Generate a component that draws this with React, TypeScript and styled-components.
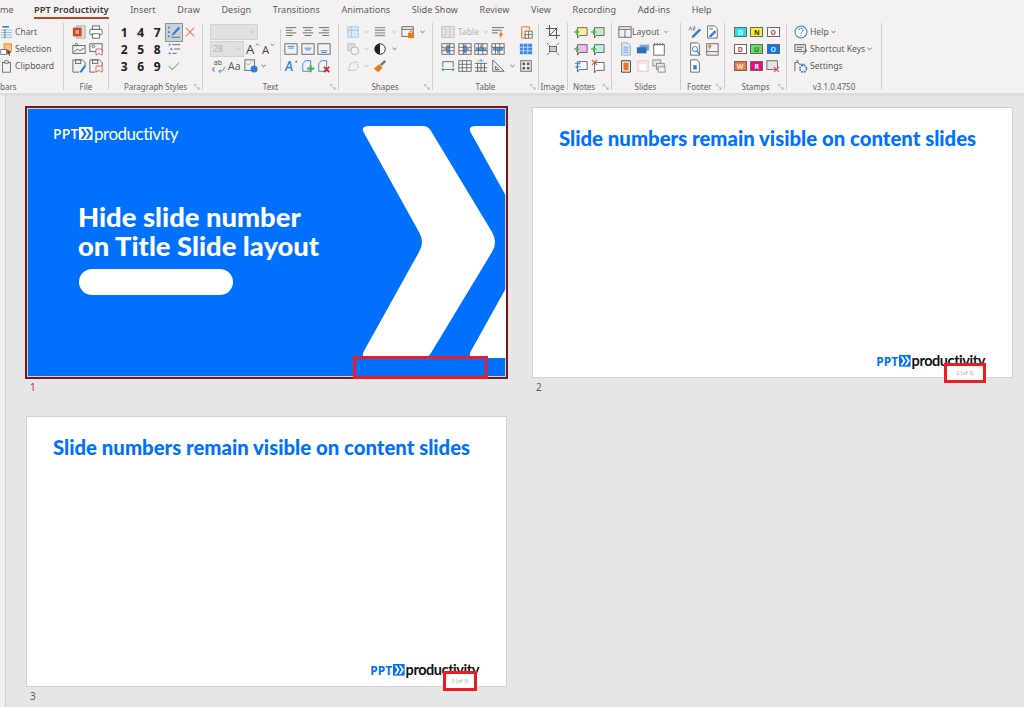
import React, { ReactNode } from 'react'
import styled, { createGlobalStyle } from 'styled-components'

const GlobalStyle = createGlobalStyle`
  html, body {
    margin: 0;
    height: 100%;
    overflow: hidden;
    background: #e6e6e6;
  }
  body {
    font-family: "Noto Sans", "Open Sans", sans-serif;
  }
`

const Page = styled.div`
  display: flex;
  flex-direction: column;
  width: 1024px;
  height: 707px;
  overflow: hidden;
`

const Ribbon = styled.header`
  flex: 0 0 93px;
  background: #f3f2f1;
  border-bottom: 1px solid #dcdcdc;
  box-shadow: 0 1px 2px rgba(0, 0, 0, 0.08);
  position: relative;
  z-index: 1;
`

const Tabs = styled.nav`
  display: flex;
  height: 23px;
  padding-left: 34px;
  gap: 21.6px;
  position: relative;
`

const Tab = styled.div<{ $active?: boolean }>`
  height: 17px;
  line-height: 20px;
  font-size: ${({ $active }) => ($active ? 9.3 : 9.05)}px;
  letter-spacing: 0.05px;
  white-space: nowrap;
  color: ${({ $active }) => ($active ? '#3a3a3a' : '#5a5a5a')};
  font-weight: ${({ $active }) => ($active ? 600 : 400)};
  border-bottom: ${({ $active }) => ($active ? '2px solid #b7472a' : '2px solid transparent')};
`

const CutTab = styled(Tab)`
  position: absolute;
  left: 0;
`

const Groups = styled.div`
  display: flex;
  height: 70px;
`

const Group = styled.section<{ $w: number; $pad?: number }>`
  flex: 0 0 ${({ $w }) => $w}px;
  display: flex;
  flex-direction: column;
  position: relative;
  box-sizing: border-box;
  padding-left: ${({ $pad }) => $pad ?? 7}px;
  border-right: 1px solid #cdcdcd;
  margin-bottom: 3px;
`

const GroupBody = styled.div`
  flex: 1;
  display: flex;
  padding-top: 0.5px;
`

const GroupLabel = styled.div<{ $left?: boolean }>`
  height: 9px;
  line-height: 12px;
  font-size: 8px;
  color: #5f5f5f;
  white-space: nowrap;
  margin-left: ${({ $left }) => ($left ? 0 : -7)}px;
  text-align: ${({ $left }) => ($left ? 'left' : 'center')};
`

const Launcher = styled.svg`
  position: absolute;
  right: 2px;
  bottom: 0;
  width: 6px;
  height: 6px;
`

const IconGrid = styled.div<{ $tpl: string }>`
  display: grid;
  grid-template-columns: ${({ $tpl }) => $tpl};
  grid-auto-rows: 17px;
`

const Cell = styled.div<{ $span?: number; $active?: boolean }>`
  display: flex;
  align-items: center;
  justify-content: center;
  grid-column: span ${({ $span }) => $span ?? 1};
  box-sizing: border-box;
  background: ${({ $active }) => ($active ? '#c9d3da' : 'transparent')};
  outline: ${({ $active }) => ($active ? '1px solid #8d9499' : 'none')};
`

const Stack = styled.div`
  display: flex;
  flex-direction: column;
`

const Row = styled.div`
  display: flex;
  align-items: center;
  height: 17px;
  gap: 2px;
`

const ItemText = styled.span<{ $muted?: boolean }>`
  font-size: 8.6px;
  color: ${({ $muted }) => ($muted ? '#b5b5b5' : '#5a5a5a')};
  white-space: nowrap;
`

const NumberKey = styled.span`
  font-family: "Open Sans", sans-serif;
  font-weight: 700;
  font-size: 12px;
  color: #202020;
`

const Stamp = styled.span<{ $bg: string; $fg: string }>`
  display: flex;
  align-items: center;
  justify-content: center;
  box-sizing: border-box;
  width: 13px;
  height: 10px;
  font-size: 7px;
  font-weight: 700;
  background: ${({ $bg }) => $bg};
  color: ${({ $fg }) => $fg};
  border: 1px solid #666;
`

const Disabled = styled.div<{ $w: number }>`
  display: flex;
  align-items: center;
  justify-content: space-between;
  box-sizing: border-box;
  width: ${({ $w }) => $w}px;
  height: 16px;
  padding: 0 2px 0 2px;
  background: #e1e1e1;
  border: 1px solid #d2d2d2;
  font-size: 8.6px;
  color: #b0b0b0;
`

const Inner = styled.div`
  width: 1px;
  height: 42px;
  margin: 5px 2px 0 3.5px;
  background: #cfcfcf;
`

const Canvas = styled.main`
  flex: 1;
  display: flex;
  background: #e6e6e6;
`

const Gutter = styled.div`
  flex: 0 0 5px;
  background: #efefef;
  border-right: 1px solid #d0d0d0;
`

const SlideGrid = styled.div`
  display: grid;
  grid-template-columns: 479px 479px;
  grid-auto-rows: 309px;
  column-gap: 27px;
  padding: 14px 0 0 21px;
`

const SlideCell = styled.div`
  display: flex;
  flex-direction: column;
`

const Slide = styled.div<{ $selected?: boolean }>`
  position: relative;
  box-sizing: border-box;
  width: 479px;
  height: 269px;
  display: flex;
  flex-direction: column;
  background: ${({ $selected }) => ($selected ? '#0070ff' : '#fff')};
  box-shadow: ${({ $selected }) =>
    $selected ? 'inset 0 0 0 1px #c6d5ea, 0 0 0 2px #7d1518' : '0 0 0 1px #d3d3d3'};
`

const SlideNumber = styled.div<{ $selected?: boolean }>`
  margin: 4px 0 0 3px;
  font-size: 10px;
  line-height: 12px;
  color: ${({ $selected }) => ($selected ? '#c0392b' : '#5a5a5a')};
`

const ContentTitle = styled.h2`
  margin: 18px 0 0 26px;
  font-family: Lato, sans-serif;
  font-weight: 900;
  font-size: 20.33px;
  line-height: 24px;
  color: #0070ff;
  white-space: nowrap;
`

const TitleArt = styled.svg`
  position: absolute;
  left: 0;
  top: 0;
  width: 479px;
  height: 269px;
`

const Hero = styled.div`
  display: flex;
  flex-direction: column;
  padding: 15px 0 0 26px;
  position: relative;
`

const HeroTitle = styled.h1`
  margin: 58px 0 0 25px;
  font-family: Lato, sans-serif;
  font-weight: 900;
  font-size: 27.4px;
  line-height: 29px;
  color: #fff;
  white-space: nowrap;
`

const Pill = styled.div`
  width: 154px;
  height: 26px;
  margin: 9px 0 0 26px;
  border-radius: 13px;
  background: #fff;
`

const LogoWrap = styled.div<{ $light?: boolean; $size: number }>`
  display: flex;
  align-items: center;
  gap: ${({ $size }) => $size * 0.06}px;
  height: ${({ $size }) => $size * 1.25}px;
  font-family: Lato, sans-serif;
  font-size: ${({ $size }) => $size}px;
  color: ${({ $light }) => ($light ? '#fff' : '#111')};
`

const LogoPpt = styled.span<{ $light?: boolean }>`
  font-family: "Open Sans", sans-serif;
  font-weight: ${({ $light }) => ($light ? 600 : 700)};
  font-size: 0.82em;
  letter-spacing: 0.01em;
  color: ${({ $light }) => ($light ? '#fff' : '#0070ff')};
`

const LogoWord = styled.span<{ $light?: boolean }>`
  font-weight: ${({ $light }) => ($light ? 400 : 700)};
  letter-spacing: -0.03em;
`

const ContentLogo = styled.div`
  margin-top: auto;
  align-self: flex-end;
  margin-right: 27px;
  margin-bottom: 7px;
`

const RedBox = styled.div<{ $l: number; $t: number; $w: number; $h: number; $fill: string }>`
  position: absolute;
  left: ${({ $l }) => $l}px;
  top: ${({ $t }) => $t}px;
  width: ${({ $w }) => $w}px;
  height: ${({ $h }) => $h}px;
  box-sizing: border-box;
  display: flex;
  align-items: center;
  justify-content: center;
  border: 3px solid #ed1c24;
  background: ${({ $fill }) => $fill};
  font-size: 5.4px;
  color: #a9a9a9;
`

const G = '#5e5e5e'
const B = '#2f7fd6'
const R = '#d9534f'
const O = '#e07b25'

const icons: Record<string, ReactNode> = {
  chart: (
    <>
      <rect x="3" y="0" width="8" height="2" fill={B} />
      <path d="M1 5h14M1 8h14M1 11h14M1 14h14" stroke="#7fb2e5" />
      <path d="M6 4v11" stroke={G} />
    </>
  ),
  selection: (
    <>
      <rect x="5" y="1" width="9" height="9" fill="#f5c37a" stroke={O} />
      <rect x="1" y="8" width="7" height="6" fill="#fff" stroke={G} />
      <path d="M9 8l5 4-2.500 .5 1 3-1 .5-1.500-3-1 1.500z" fill="#444" />
    </>
  ),
  clipboard: (
    <>
      <rect x="3" y="3" width="10" height="12" fill="none" stroke={G} />
      <rect x="6" y="1" width="4" height="3" fill="#fff" stroke={G} />
    </>
  ),
  ppt: (
    <>
      <rect x="5" y="1" width="10" height="14" fill="#ddd" stroke="#aaa" />
      <rect x="1" y="3" width="10" height="10" fill="#d24726" />
      <rect x="4" y="6" width="4" height="4" fill="#f0a890" />
    </>
  ),
  print: (
    <>
      <rect x="4" y="1" width="8" height="4" fill="#fff" stroke={G} />
      <rect x="1" y="5" width="14" height="6" rx="1" fill="#fff" stroke={G} />
      <rect x="4" y="10" width="8" height="5" fill="#fff" stroke={G} />
    </>
  ),
  picA: (
    <>
      <rect x="1" y="4" width="14" height="9" fill="none" stroke={G} />
      <path d="M2 12l4-4 3 2 5-3" fill="none" stroke={G} />
      <circle cx="5" cy="3" r="1.500" fill="none" stroke={G} />
    </>
  ),
  picB: (
    <>
      <rect x="1" y="2" width="14" height="9" fill="none" stroke={G} />
      <circle cx="5" cy="5" r="1.500" fill="none" stroke={G} />
      <path d="M8 8h7v7l-3.500-2L8 15z" fill="#fff" stroke={R} />
    </>
  ),
  saveEdit: (
    <>
      <path d="M1 1h11l3 3v5M1 1v14h7" fill="none" stroke={G} />
      <rect x="4" y="1" width="6" height="4" fill="none" stroke={G} />
      <path d="M9 14l5-7 2 1.500-5 7H9z" fill={B} />
    </>
  ),
  saveRed: (
    <>
      <path d="M1 1h11l3 3v4M1 1v14h6" fill="none" stroke={G} />
      <rect x="4" y="1" width="6" height="4" fill="none" stroke={G} />
      <path d="M8 8h7v7l-3.500-2L8 15z" fill="#fff" stroke={R} />
    </>
  ),
  listEdit: (
    <>
      <path d="M1 3h2M1 8h2M1 13h2" stroke={B} strokeWidth="2" />
      <path d="M5 14h10" stroke={G} />
      <path d="M6 10l7-8 2 2-7 7-3 1z" fill={B} />
    </>
  ),
  cross: <path d="M3 3l10 10M13 3L3 13" stroke="#e8736f" strokeWidth="1.200" />,
  bullets: (
    <>
      <path d="M2 3h2M4 8h2M2 13h2" stroke={B} strokeWidth="2" />
      <path d="M6 3h9M8 8h7M6 13h5" stroke={G} />
    </>
  ),
  check: <path d="M2 8l4 4 8-8" fill="none" stroke="#62b96f" strokeWidth="1.200" />,
  grow: (
    <>
      <text x="0" y="14" fontFamily="Open Sans" fontSize="15" fill="#444">A</text>
      <path d="M11 4l2-2 2 2" fill="none" stroke={B} />
    </>
  ),
  shrink: (
    <>
      <text x="1" y="14" fontFamily="Open Sans" fontSize="13" fill="#444">A</text>
      <path d="M11 2l2 2 2-2" fill="none" stroke={B} />
    </>
  ),
  replace: (
    <>
      <text x="2" y="7" fontFamily="Open Sans" fontSize="8" fill="#444">ab</text>
      <path d="M3 10a2 2 0 1 0 0 4" fill="none" stroke="#444" />
      <path d="M14 9c0 4-3 5-6 5m2-2l-2 2 2 2" fill="none" stroke={B} />
    </>
  ),
  caseAa: (
    <text x="0" y="13" fontFamily="Open Sans" fontSize="12" fill="#555">Aa</text>
  ),
  spell: (
    <>
      <rect x="1" y="1" width="11" height="12" fill="none" stroke={G} />
      <path d="M3 5l2 2 4-4" fill="none" stroke="#62b96f" />
      <circle cx="11.500" cy="11.500" r="4" fill={B} />
    </>
  ),
  alignL: <path d="M2 3h12M2 6h8M2 9h12M2 12h8" stroke={G} />,
  alignC: <path d="M2 3h12M4 6h8M2 9h12M4 12h8" stroke={G} />,
  alignR: <path d="M2 3h12M6 6h8M2 9h12M6 12h8" stroke={G} />,
  boxTop: (
    <>
      <rect x="1" y="2" width="14" height="12" fill="none" stroke={G} />
      <path d="M4 5h8M5 7h6" stroke={B} />
    </>
  ),
  boxMid: (
    <>
      <rect x="1" y="2" width="14" height="12" fill="none" stroke={G} />
      <path d="M4 7h8M5 9h6" stroke={B} />
    </>
  ),
  boxBot: (
    <>
      <rect x="1" y="2" width="14" height="12" fill="none" stroke={G} />
      <path d="M4 10h8M5 12h6" stroke={B} />
    </>
  ),
  aStyle: (
    <>
      <text x="1" y="14" fontFamily="Lato" fontStyle="italic" fontWeight="700" fontSize="14" fill={B}>A</text>
      <circle cx="14" cy="3" r="1" fill={G} />
    </>
  ),
  addGreen: (
    <>
      <path d="M2 5l3-3h6v12H2z" fill="none" stroke={B} />
      <path d="M11 7v8M7 11h8" stroke="#4caf50" strokeWidth="2.400" />
    </>
  ),
  delRed: (
    <>
      <path d="M2 5l3-3h6v12H2z" fill="none" stroke={B} />
      <path d="M8 9l6 6M14 9l-6 6" stroke="#e02020" strokeWidth="2" />
    </>
  ),
  gridBlue: (
    <>
      <rect x="2" y="2" width="12" height="12" fill="#dbe8f5" stroke="#a9c4e0" />
      <path d="M6 2v12M2 6h12" stroke="#a9c4e0" />
    </>
  ),
  lines: (
    <path d="M2 3h12M2 6h12M2 9h12M2 12h12" stroke="#9a9a9a" strokeWidth="1.500" />
  ),
  lockWin: (
    <>
      <rect x="1" y="2" width="13" height="11" fill="none" stroke={G} />
      <path d="M1 5h13" stroke={G} />
      <rect x="8" y="9" width="7" height="6" fill={O} />
      <path d="M10 9V7h3v2" fill="none" stroke={O} />
    </>
  ),
  shapeGrey: (
    <>
      <rect x="2" y="2" width="8" height="8" fill="#ddd" stroke="#bbb" />
      <circle cx="10" cy="10" r="4.500" fill="#f3f2f1" stroke="#aaa" />
    </>
  ),
  contrast: (
    <>
      <circle cx="8" cy="8" r="6" fill="#fff" stroke="#222" />
      <path d="M8 2a6 6 0 0 0 0 12z" fill="#222" />
    </>
  ),
  freeform: (
    <path d="M3 13l2-8 7-2 2 6-4 4z" fill="none" stroke="#aaa" strokeDasharray="2 1" />
  ),
  brush: (
    <>
      <path d="M1 11l6-5 4 4-5 5z" fill={O} />
      <path d="M8 6l5-5 2 2-5 5z" fill="#777" />
    </>
  ),
  tableGrey: (
    <>
      <rect x="1" y="2" width="14" height="12" fill="#f3f2f1" stroke="#b5b5b5" />
      <path d="M1 5h14M1 8h14M1 11h14M5 2v12M10 2v12" stroke="#c5c5c5" />
    </>
  ),
  lineOrange: (
    <>
      <path d="M1 3h14M1 6h11M1 9h7" stroke={G} />
      <path d="M12 6l-3 6h2l-1 4 4-6h-2z" fill={O} />
    </>
  ),
  clipTable: (
    <>
      <path d="M3 2h9v4M3 2v13h5" fill="#f5d9b8" stroke={O} />
      <rect x="7" y="7" width="8" height="8" fill="#fff" stroke={G} />
      <path d="M7 11h8M11 7v8" stroke={G} />
    </>
  ),
  tL: (
    <>
      <rect x="1" y="2" width="14" height="12" fill="#fff" stroke={G} />
      <rect x="6" y="3" width="4" height="10" fill="#5d9bdc" />
      <path d="M1 6h14M1 10h14M10 2v12" stroke={G} />
      <path d="M7 8H3" stroke="#333" />
    </>
  ),
  tR: (
    <>
      <rect x="1" y="2" width="14" height="12" fill="#fff" stroke={G} />
      <rect x="6" y="3" width="4" height="10" fill="#5d9bdc" />
      <path d="M1 6h14M1 10h14M6 2v12" stroke={G} />
      <path d="M9 8h4" stroke="#333" />
    </>
  ),
  tU: (
    <>
      <rect x="1" y="2" width="14" height="12" fill="#fff" stroke={G} />
      <rect x="2" y="6" width="12" height="4" fill="#5d9bdc" />
      <path d="M5 2v12M10 2v12M1 10h14" stroke={G} />
      <path d="M8 7V3" stroke="#333" />
    </>
  ),
  tD: (
    <>
      <rect x="1" y="2" width="14" height="12" fill="#fff" stroke={G} />
      <rect x="2" y="6" width="12" height="4" fill="#5d9bdc" />
      <path d="M5 2v12M10 2v12M1 6h14" stroke={G} />
      <path d="M8 9v4" stroke="#333" />
    </>
  ),
  span: (
    <>
      <path d="M2 9V3h12v6" fill="none" stroke={G} />
      <path d="M1 12h14M1 12l2-2M1 12l2 2M15 12l-2-2M15 12l-2 2" fill="none" stroke={B} />
    </>
  ),
  grid: (
    <>
      <rect x="1" y="2" width="14" height="12" fill="#fff" stroke={G} />
      <path d="M1 6h14M1 10h14M5 2v12M10 2v12" stroke={G} />
    </>
  ),
  rowsEq: (
    <>
      <path d="M1 5h14M1 10h14M1 14h14M4 5v9M8 5v9M12 5v9" stroke={G} fill="none" />
      <path d="M8 0v3" stroke={B} />
      <path d="M4 2h8" stroke={B} strokeDasharray="1 1" />
    </>
  ),
  diag: (
    <>
      <path d="M2 1v13h13z" fill="none" stroke={G} />
      <path d="M5 8v4h4z" fill="none" stroke={G} />
    </>
  ),
  tableBlue: (
    <>
      <rect x="1" y="2" width="14" height="12" fill="#3b8ae0" />
      <path d="M1 6h14M1 10h14M5 2v12M10 2v12" stroke="#fff" strokeWidth=".7" />
    </>
  ),
  tableDots: (
    <>
      <rect x="2" y="2" width="12" height="12" fill="none" stroke={G} />
      <rect x="4" y="4" width="3" height="3" fill={G} />
      <rect x="9" y="4" width="3" height="3" fill={G} />
      <rect x="4" y="9" width="3" height="3" fill={G} />
      <rect x="9" y="9" width="3" height="3" fill={G} />
    </>
  ),
  crop: (
    <path d="M4 0v12h12M0 4h12v12M3 13L13 3" fill="none" stroke="#444" />
  ),
  fit: (
    <>
      <rect x="4" y="5" width="8" height="6" fill="#ccc" stroke={G} />
      <path d="M1 1l3 3M15 1l-3 3M1 15l3-3M15 15l-3-3" stroke={B} />
    </>
  ),
  nY: (
    <>
      <path d="M4 3h11v9H6l-2 3z" fill="#f5ef9a" stroke={G} />
      <path d="M3 5v6M0 8h6" stroke="#5cb85c" strokeWidth="1.500" />
    </>
  ),
  nG: (
    <>
      <path d="M4 3h11v9H6l-2 3z" fill="#c5ecc0" stroke={G} />
      <path d="M3 5v6M0 8h6" stroke="#5cb85c" strokeWidth="1.500" />
    </>
  ),
  nP: (
    <>
      <path d="M4 3h11v9H6l-2 3z" fill="#f0b8ee" stroke={G} />
      <path d="M3 5v6M0 8h6" stroke="#5cb85c" strokeWidth="1.500" />
    </>
  ),
  nC: (
    <>
      <path d="M4 3h11v9H6l-2 3z" fill="#bfeee8" stroke={G} />
      <path d="M3 5v6M0 8h6" stroke="#5cb85c" strokeWidth="1.500" />
    </>
  ),
  nA: (
    <>
      <path d="M4 3h11v9H6l-2 3z" fill="#fff" stroke={G} />
      <path d="M1 5h6M5 3l2 2-2 2M8 9H2M4 7L2 9l2 2" fill="none" stroke={B} />
    </>
  ),
  nX: (
    <>
      <path d="M4 4h11v9H6l-2 3z" fill="#fff" stroke={G} />
      <path d="M1 1l6 6M7 1L1 7" stroke="#e05050" strokeWidth="1.200" />
    </>
  ),
  layout: (
    <>
      <rect x="1" y="2" width="14" height="12" fill="none" stroke={G} />
      <path d="M1 5h14M8 5v9" stroke={G} />
    </>
  ),
  page: (
    <>
      <path d="M3 1h7l3 3v11H3z" fill="#dce8f5" stroke="#8aa9c9" />
      <path d="M5 6h6M5 8h6M5 10h6M5 12h6" stroke={B} strokeWidth=".6" />
    </>
  ),
  box: (
    <>
      <rect x="4" y="3" width="11" height="7" fill="#7fa8d6" />
      <rect x="1" y="6" width="11" height="7" fill="#2f6fb7" />
    </>
  ),
  win: (
    <>
      <rect x="2" y="3" width="12" height="12" fill="#fff" stroke={G} />
      <path d="M3 1v3M6 1v3M9 1v3M12 1v3" stroke={G} />
    </>
  ),
  orangeDoc: (
    <>
      <path d="M3 2h10v13H3z" fill="#fff" stroke="#222" />
      <rect x="5" y="4" width="6" height="9" fill={O} />
    </>
  ),
  pinkRect: (
    <>
      <rect x="2" y="2" width="12" height="12" fill="#fde0e8" stroke="#f5c0cf" />
      <rect x="4" y="6" width="8" height="7" fill="#fff" />
    </>
  ),
  stack: (
    <>
      <rect x="1" y="1" width="9" height="7" fill="#e5e5e5" stroke="#888" />
      <rect x="5" y="5" width="9" height="7" fill="#e5e5e5" stroke="#888" />
      <rect x="7" y="9" width="8" height="6" fill="#f3f2f1" stroke="#888" />
    </>
  ),
  pencilNum: (
    <>
      <path d="M1 6l2-4 1 4M6 2h2v2H6v2h2" fill="none" stroke={G} strokeWidth=".8" />
      <path d="M4 15l1-3 8-8 2 2-8 8z" fill={B} />
    </>
  ),
  docBrush: (
    <>
      <path d="M3 1h8l3 3v11H3z" fill="#fff" stroke={G} />
      <path d="M4 13l7-7 2 2-6 6z" fill={B} />
      <rect x="5" y="3" width="4" height="3" fill="#9ab8d8" />
    </>
  ),
  docSearch: (
    <>
      <path d="M3 1h8l2 2v12H3z" fill="#fff" stroke={G} />
      <circle cx="8" cy="8" r="3" fill="#fff" stroke={B} />
      <path d="M10 10l4 5" stroke={B} strokeWidth="1.400" />
    </>
  ),
  orangeBar: (
    <>
      <rect x="2" y="2" width="13" height="13" fill="none" stroke={G} />
      <path d="M2 11h13" stroke={G} />
      <path d="M6 1l-3 5h2l-1 4 4-6H6z" fill={O} />
    </>
  ),
  doc: (
    <>
      <path d="M3 1h7l3 3v11H3z" fill="#fff" stroke={G} />
      <rect x="6" y="7" width="4" height="5" fill={B} />
    </>
  ),
  screenX: (
    <>
      <rect x="1" y="2" width="12" height="10" fill="#e5e5e5" stroke={G} />
      <path d="M9 9l6 6M15 9l-6 6" stroke="#e05050" strokeWidth="1.300" />
    </>
  ),
  help: (
    <>
      <circle cx="8" cy="8" r="6.800" fill="#fff" stroke={B} strokeWidth="1.200" />
      <path d="M5.500 6a2.500 2.500 0 1 1 3.500 2.300c-.7.400-1 .9-1 1.700M8 11.500v1.500" fill="none" stroke={B} />
    </>
  ),
  keys: (
    <>
      <rect x="1" y="3" width="12" height="8" fill="#e5e5e5" stroke={G} />
      <path d="M3 6h8M3 8.500h6" stroke={G} />
      <path d="M13 8c2 1 1 3 0 4s-2 2-3 2" fill="none" stroke={B} strokeWidth="1.200" />
    </>
  ),
  settings: (
    <>
      <path d="M1 14V4h4l1 2h6" fill="none" stroke={G} />
      <circle cx="4" cy="2" r="1" fill={G} />
      <circle cx="10.500" cy="11" r="3.800" fill="none" stroke={B} strokeWidth="2" strokeDasharray="2 1" />
    </>
  ),
}

const Ico = ({ n, size = 14 }: { n: string; size?: number }) => (
  <svg width={size} height={size} viewBox="0 0 16 16" style={{ overflow: 'visible' }}>
    {icons[n]}
  </svg>
)

const Chev = ({ muted }: { muted?: boolean }) => (
  <svg width="5" height="4" viewBox="0 0 6 4">
    <path d="M.5.5L3 3 5.500.5" fill="none" stroke={muted ? '#b5b5b5' : '#555'} />
  </svg>
)

const Launch = () => (
  <Launcher viewBox="0 0 7 7">
    <path d="M.5 3V.5H3M2 2l4 4M6 3.500V6H3.500" fill="none" stroke="#a5a5a5" strokeWidth=".8" />
  </Launcher>
)

const IconCells = ({ names }: { names: string[] }) => (
  <>
    {names.map((n, i) => (
      <Cell key={i}>{n === '-' ? null : n === 'v' ? <Chev /> : n === 'w' ? <Chev muted /> : <Ico n={n} />}</Cell>
    ))}
  </>
)

const NUM_ROWS: [string, string, string][] = [
  ['1', '4', '7'],
  ['2', '5', '8'],
  ['3', '6', '9'],
]
const NUM_EXTRA = [
  ['listEdit', 'cross'],
  ['bullets', '-'],
  ['check', '-'],
]

const STAMPS = [
  { t: 'D', bg: '#22e0e8', fg: '#e8ffff' },
  { t: 'N', bg: '#f4f040', fg: '#333' },
  { t: 'O', bg: '#fff', fg: '#e53935' },
  { t: 'D', bg: '#fff', fg: '#e53935' },
  { t: 'U', bg: '#66e066', fg: '#2a6a2a' },
  { t: 'O', bg: '#0a78f0', fg: '#cfe4ff' },
  { t: 'W', bg: '#f07838', fg: '#ffe8d8' },
  { t: 'R', bg: '#f00a78', fg: '#fff' },
]

const TABS = [
  'Insert',
  'Draw',
  'Design',
  'Transitions',
  'Animations',
  'Slide Show',
  'Review',
  'View',
  'Recording',
  'Add-ins',
  'Help',
]

const RibbonBar = () => (
  <Ribbon>
    <Tabs>
      <CutTab>me</CutTab>
      <Tab $active>PPT Productivity</Tab>
      {TABS.map((t) => (
        <Tab key={t}>{t}</Tab>
      ))}
    </Tabs>
    <Groups>
      <Group $w={64} $pad={0}>
        <GroupBody>
          <Stack>
            <Row>
              <Ico n="chart" size={13} />
              <ItemText>Chart</ItemText>
            </Row>
            <Row>
              <Ico n="selection" size={13} />
              <ItemText>Selection</ItemText>
            </Row>
            <Row>
              <Ico n="clipboard" size={13} />
              <ItemText>Clipboard</ItemText>
            </Row>
          </Stack>
        </GroupBody>
        <GroupLabel $left>bars</GroupLabel>
      </Group>
      <Group $w={45}>
        <GroupBody>
          <IconGrid $tpl="repeat(2, 16.5px)">
            <IconCells names={['ppt', 'print', 'picA', 'picB', 'saveEdit', 'saveRed']} />
          </IconGrid>
        </GroupBody>
        <GroupLabel>File</GroupLabel>
      </Group>
      <Group $w={94}>
        <GroupBody>
          <IconGrid $tpl="repeat(5, 16.5px)">
            {NUM_ROWS.map((row, i) => (
              <React.Fragment key={i}>
                {row.map((k) => (
                  <Cell key={k}>
                    <NumberKey>{k}</NumberKey>
                  </Cell>
                ))}
                <Cell $active={i === 0}>
                  {NUM_EXTRA[i][0] !== '-' && <Ico n={NUM_EXTRA[i][0]} />}
                </Cell>
                <Cell>{NUM_EXTRA[i][1] !== '-' && <Ico n={NUM_EXTRA[i][1]} />}</Cell>
              </React.Fragment>
            ))}
          </IconGrid>
        </GroupBody>
        <GroupLabel>Paragraph Styles</GroupLabel>
        <Launch />
      </Group>
      <Group $w={136}>
        <GroupBody>
          <Stack>
            <Row>
              <Disabled $w={48}>
                <span />
                <Chev muted />
              </Disabled>
            </Row>
            <Row>
              <Disabled $w={34}>
                28
                <Chev muted />
              </Disabled>
              <IconGrid $tpl="14px 16.5px">
                <Cell>
                  <Ico n="grow" />
                </Cell>
                <Cell>
                  <Ico n="shrink" />
                </Cell>
              </IconGrid>
            </Row>
            <Row>
              <IconGrid $tpl="1px repeat(3, 16px) 8px">
                <IconCells names={['-', 'replace', 'caseAa', 'spell', 'v']} />
              </IconGrid>
            </Row>
          </Stack>
          <Inner />
          <IconGrid $tpl="repeat(3, 16.5px)">
            <IconCells
              names={['alignL', 'alignC', 'alignR', 'boxTop', 'boxMid', 'boxBot', 'aStyle', 'addGreen', 'delRed']}
            />
          </IconGrid>
        </GroupBody>
        <GroupLabel>Text</GroupLabel>
        <Launch />
      </Group>
      <Group $w={94} $pad={6}>
        <GroupBody>
          <IconGrid $tpl="16px 11px 16px 12px 16px 12px">
            <IconCells
              names={[
                'gridBlue', 'w', 'lines', 'w', 'lockWin', 'v',
                'shapeGrey', 'w', 'contrast', 'v', '-', '-',
                'freeform', 'w', 'brush', '-', '-', '-',
              ]}
            />
          </IconGrid>
        </GroupBody>
        <GroupLabel>Shapes</GroupLabel>
        <Launch />
      </Group>
      <Group $w={106}>
        <GroupBody>
          <IconGrid $tpl="16.5px 16.5px 16.5px 16.5px 12px 16.5px">
            <Cell>
              <Ico n="tableGrey" />
            </Cell>
            <Cell $span={2}>
              <ItemText $muted>Table</ItemText>
              &nbsp;
              <Chev muted />
            </Cell>
            <IconCells names={['lineOrange', '-', 'clipTable']} />
            <IconCells names={['tL', 'tR', 'tU', 'tD', '-', 'tableBlue']} />
            <IconCells names={['span', 'grid', 'rowsEq', 'diag', 'v', 'tableDots']} />
          </IconGrid>
        </GroupBody>
        <GroupLabel>Table</GroupLabel>
        <Launch />
      </Group>
      <Group $w={29} $pad={6}>
        <GroupBody>
          <IconGrid $tpl="16.5px">
            <IconCells names={['crop', 'fit']} />
          </IconGrid>
        </GroupBody>
        <GroupLabel>Image</GroupLabel>
      </Group>
      <Group $w={44} $pad={5}>
        <GroupBody>
          <IconGrid $tpl="repeat(2, 16.5px)">
            <IconCells names={['nY', 'nG', 'nP', 'nC', 'nA', 'nX']} />
          </IconGrid>
        </GroupBody>
        <GroupLabel $left>Notes</GroupLabel>
        <Launch />
      </Group>
      <Group $w={69} $pad={6}>
        <GroupBody>
          <IconGrid $tpl="repeat(3, 16.5px)">
            <Cell $span={3}>
              <Ico n="layout" />
              <ItemText>Layout</ItemText>
              &nbsp;
              <Chev />
            </Cell>
            <IconCells names={['page', 'box', 'win', 'orangeDoc', 'pinkRect', 'stack']} />
          </IconGrid>
        </GroupBody>
        <GroupLabel>Slides</GroupLabel>
      </Group>
      <Group $w={44} $pad={6}>
        <GroupBody>
          <IconGrid $tpl="repeat(2, 16.5px)">
            <IconCells names={['pencilNum', 'docBrush', 'docSearch', 'orangeBar', 'doc']} />
          </IconGrid>
        </GroupBody>
        <GroupLabel $left>Footer</GroupLabel>
        <Launch />
      </Group>
      <Group $w={62}>
        <GroupBody>
          <IconGrid $tpl="repeat(3, 16.5px)">
            {STAMPS.map((s, i) => (
              <Cell key={i}>
                <Stamp $bg={s.bg} $fg={s.fg}>
                  {s.t}
                </Stamp>
              </Cell>
            ))}
            <Cell>
              <Ico n="screenX" />
            </Cell>
          </IconGrid>
        </GroupBody>
        <GroupLabel>Stamps</GroupLabel>
        <Launch />
      </Group>
      <Group $w={95} $pad={7}>
        <GroupBody>
          <Stack>
            <Row>
              <Ico n="help" />
              <ItemText>Help</ItemText>
              <Chev />
            </Row>
            <Row>
              <Ico n="keys" />
              <ItemText>Shortcut Keys</ItemText>
              <Chev />
            </Row>
            <Row>
              <Ico n="settings" />
              <ItemText>Settings</ItemText>
            </Row>
          </Stack>
        </GroupBody>
        <GroupLabel>v3.1.0.4750</GroupLabel>
      </Group>
    </Groups>
  </Ribbon>
)

const LogoMark = ({ light, size }: { light?: boolean; size: number }) => (
  <svg width={size * 0.8} height={size * 0.8} viewBox="0 0 16 16">
    <rect width="16" height="16" fill={light ? '#fff' : '#0070ff'} />
    <path
      d="M2 2h3l4 6-4 6H2l4-6zM8 2h3l4 6-4 6H8l4-6z"
      fill={light ? '#0070ff' : '#fff'}
    />
  </svg>
)

const Logo = ({ light, size }: { light?: boolean; size: number }) => (
  <LogoWrap $light={light} $size={size}>
    <LogoPpt $light={light}>PPT</LogoPpt>
    <LogoMark light={light} size={size} />
    <LogoWord $light={light}>productivity</LogoWord>
  </LogoWrap>
)

const CHEVRON =
  'M342 18H396Q401 18 404 23L465 124Q471 134 465 144L404 245Q401 250 396 250H342Q333 250 337 243L392 144Q398 134 392 124L337 25Q333 18 342 18Z'

const CONTENT_TITLE = 'Slide numbers remain visible on content slides'

const App = () => (
  <Page>
    <GlobalStyle />
    <RibbonBar />
    <Canvas>
      <Gutter />
      <SlideGrid>
        <SlideCell>
          <Slide $selected>
            <TitleArt viewBox="0 0 479 269">
              <path d={CHEVRON} fill="#fff" />
              <path d={CHEVRON} fill="#fff" transform="translate(107 0)" />
            </TitleArt>
            <Hero>
              <Logo light size={17} />
              <HeroTitle>
                Hide slide number
                <br />
                on Title Slide layout
              </HeroTitle>
              <Pill />
            </Hero>
            <RedBox $l={326} $t={248} $w={135} $h={23} $fill="#0070ff" />
          </Slide>
          <SlideNumber $selected>1</SlideNumber>
        </SlideCell>
        <SlideCell>
          <Slide>
            <ContentTitle>{CONTENT_TITLE}</ContentTitle>
            <ContentLogo>
              <Logo size={14.5} />
            </ContentLogo>
            <RedBox $l={411} $t={255} $w={42} $h={20} $fill="#fff">
              2 (of 3)
            </RedBox>
          </Slide>
          <SlideNumber>2</SlideNumber>
        </SlideCell>
        <SlideCell>
          <Slide>
            <ContentTitle>{CONTENT_TITLE}</ContentTitle>
            <ContentLogo>
              <Logo size={14.5} />
            </ContentLogo>
            <RedBox $l={416} $t={254} $w={34} $h={20} $fill="#fff">
              3 (of 3)
            </RedBox>
          </Slide>
          <SlideNumber>3</SlideNumber>
        </SlideCell>
      </SlideGrid>
    </Canvas>
  </Page>
)

export default App
